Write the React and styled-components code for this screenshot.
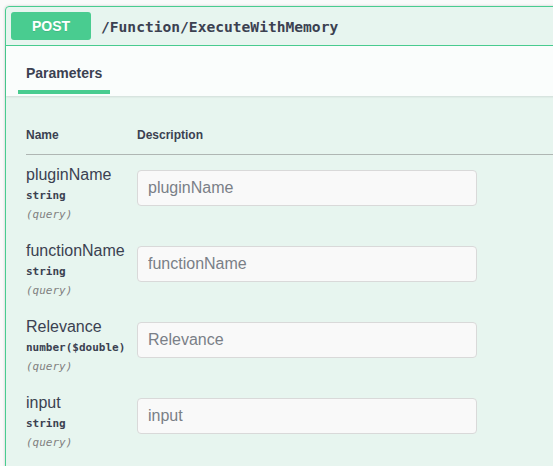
import React from "react";
import styled, { createGlobalStyle } from "styled-components";

const GlobalStyle = createGlobalStyle`
  html, body {
    margin: 0;
    padding: 0;
    background: #fafafa;
    overflow: hidden;
  }
  body {
    font-family: "Liberation Sans", Arial, sans-serif;
    color: #3b4151;
  }
`;

const Page = styled.div`
  padding: 6px 0 0 5px;
  width: 640px;
`;

const Opblock = styled.div`
  background: rgba(73, 204, 144, 0.1);
  border: 1px solid #49cc90;
  border-radius: 4px;
  box-shadow: 0 0 3px rgba(0, 0, 0, 0.19);
`;

const Summary = styled.div`
  display: flex;
  align-items: center;
  padding: 5px;
  border-bottom: 1px solid #49cc90;
`;

const Method = styled.span`
  min-width: 80px;
  height: 28px;
  display: flex;
  align-items: center;
  justify-content: center;
  background: #49cc90;
  border-radius: 3px;
  color: #fff;
  font-size: 14px;
  font-weight: 700;
  text-shadow: 0 1px 0 rgba(0, 0, 0, 0.1);
`;

const Path = styled.span`
  padding: 0 10px;
  font-family: "DejaVu Sans Mono", "Liberation Mono", monospace;
  font-size: 14.6px;
  font-weight: 700;
  color: #3b4151;
`;

const SectionHeader = styled.div`
  display: flex;
  height: 50px;
  padding: 0 12px;
  background: rgba(255, 255, 255, 0.8);
  box-shadow: 0 1px 2px rgba(0, 0, 0, 0.1);
`;

const Tab = styled.div`
  position: relative;
  display: flex;
  align-items: center;
  padding: 3px 8px 0;
  font-size: 14px;
  font-weight: 700;
  &::after {
    content: "";
    position: absolute;
    left: 0;
    right: 0;
    bottom: 2px;
    height: 4px;
    background: #49cc90;
  }
`;

const TableWrap = styled.div`
  padding: 19px 0 30px 20px;
`;

const Table = styled.div`
  display: grid;
  grid-template-columns: 111px 1fr;
`;

const Th = styled.div`
  padding: 13px 0 11px;
  font-size: 12px;
  line-height: 15px;
  font-weight: 700;
  border-bottom: 1px solid #afb6b3;
`;

const NameCell = styled.div`
  padding: 11px 0 9px;
`;

const ParamName = styled.div`
  font-size: 16px;
  line-height: 18px;
  color: #3b4151;
`;

const ParamType = styled.div`
  padding: 5px 0;
  font-family: "DejaVu Sans Mono", "Liberation Mono", monospace;
  font-size: 11px;
  line-height: 14px;
  font-weight: 700;
  color: #3b4151;
`;

const ParamIn = styled.div`
  font-family: "DejaVu Sans Mono", "Liberation Mono", monospace;
  font-size: 11px;
  line-height: 14px;
  font-style: italic;
  color: #808080;
`;

const DescCell = styled.div`
  padding: 10px 0;
`;

const Input = styled.input`
  box-sizing: border-box;
  display: block;
  width: 340px;
  height: 36px;
  margin: 5px 0;
  padding: 8px 10px;
  border: 1px solid #d9d9d9;
  border-radius: 4px;
  background: #f9f9f9;
  font-family: "Liberation Sans", Arial, sans-serif;
  font-size: 16px;
  color: #3b4151;
  outline: none;
  &::placeholder {
    color: #7a7f87;
  }
`;

const params = [
  { name: "pluginName", type: "string" },
  { name: "functionName", type: "string" },
  { name: "Relevance", type: "number($double)" },
  { name: "input", type: "string" },
];

export default function App() {
  return (
    <>
      <GlobalStyle />
      <Page>
        <Opblock>
          <Summary>
            <Method>POST</Method>
            <Path>/Function/ExecuteWithMemory</Path>
          </Summary>
          <SectionHeader>
            <Tab>Parameters</Tab>
          </SectionHeader>
          <TableWrap>
            <Table>
              <Th>Name</Th>
              <Th>Description</Th>
              {params.map((p) => (
                <React.Fragment key={p.name}>
                  <NameCell>
                    <ParamName>{p.name}</ParamName>
                    <ParamType>{p.type}</ParamType>
                    <ParamIn>(query)</ParamIn>
                  </NameCell>
                  <DescCell>
                    <Input type="text" placeholder={p.name} />
                  </DescCell>
                </React.Fragment>
              ))}
            </Table>
          </TableWrap>
        </Opblock>
      </Page>
    </>
  );
}
